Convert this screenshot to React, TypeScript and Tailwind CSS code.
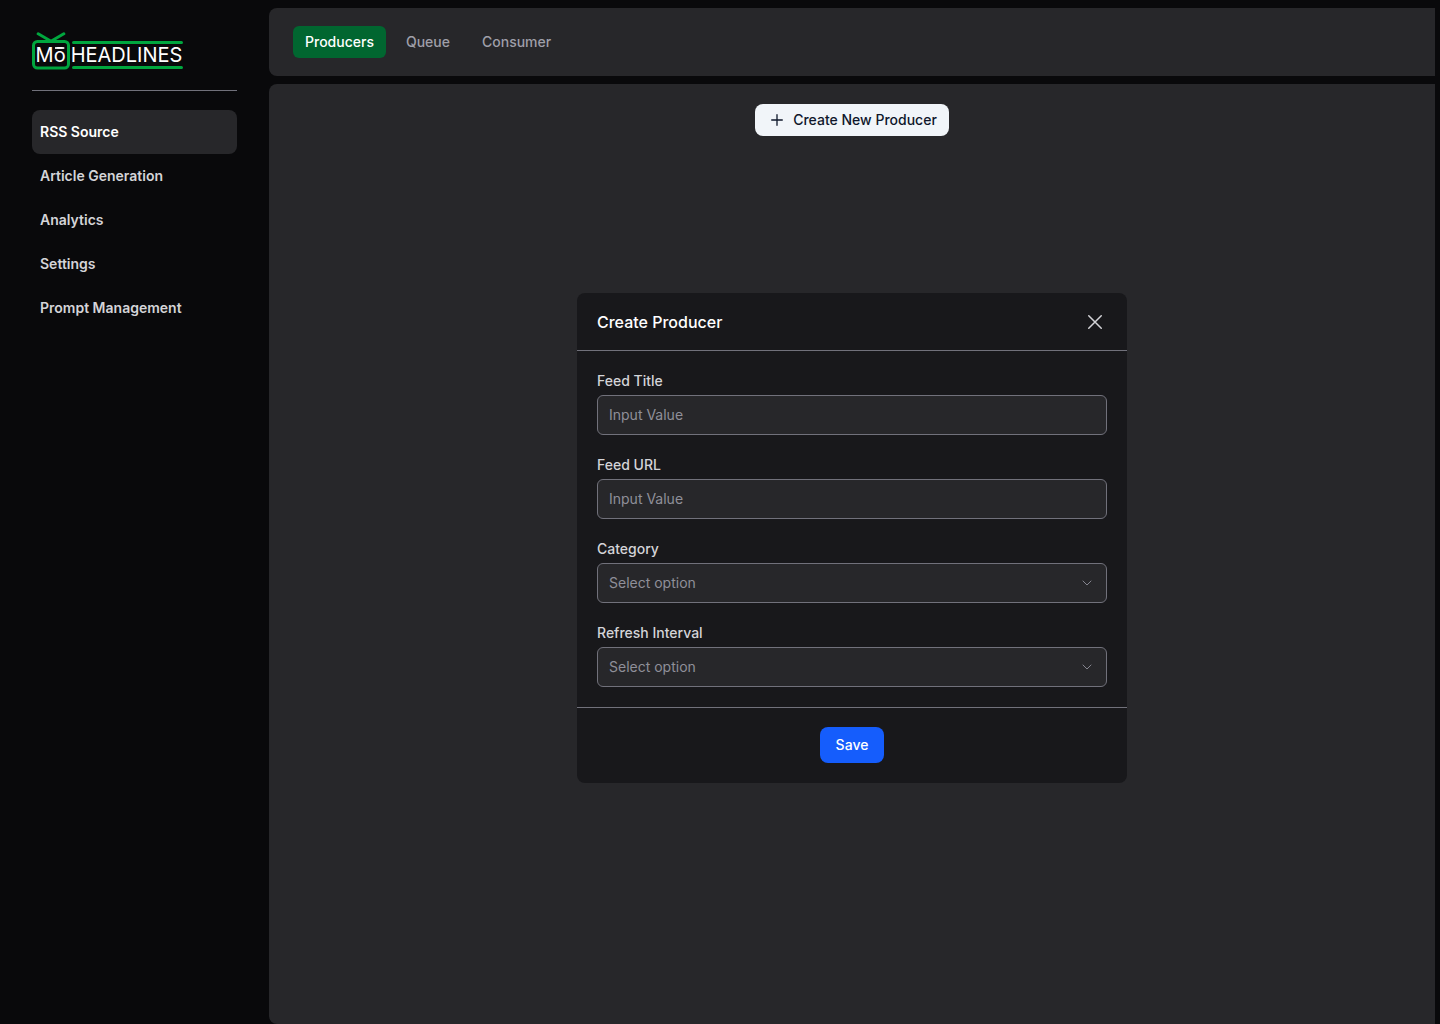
import React from "react";

const navItems = ["RSS Source", "Article Generation", "Analytics", "Settings", "Prompt Management"];
const tabs = ["Producers", "Queue", "Consumer"];

function Logo() {
  return (
    <svg width="152" height="38" viewBox="0 0 152 38" className="block" fill="none" aria-label="Mo Headlines">
      <g stroke="#00a63e" strokeWidth="3" strokeLinecap="round">
        <path d="M6.2 1.8L19 9.2L31.8 1.8" strokeLinejoin="round" />
        <rect x="1.5" y="9.5" width="35" height="26.5" rx="4" />
        <path d="M41.5 10.5H149.5M41.5 35.5H149.5" />
      </g>
      <text x="3.6" y="30" fill="#fff" fontFamily="Inter, sans-serif" fontSize="20">Mō</text>
      <path d="M23 16H32.3" stroke="#fff" strokeWidth="1.7" />
      <text x="38.7" y="30" fill="#fff" fontFamily="Inter, sans-serif" fontSize="20">HEADLINES</text>
    </svg>
  );
}

function CloseIcon() {
  return (
    <svg width="24" height="24" viewBox="0 0 24 24" fill="none" stroke="#d4d4d8" strokeWidth="1.5" strokeLinecap="round">
      <path d="M5.75 5.75L18.25 18.25M18.25 5.75L5.75 18.25" />
    </svg>
  );
}

function ChevronIcon() {
  return (
    <svg width="16" height="16" viewBox="0 0 16 16" fill="none" stroke="#85858f" strokeLinecap="round" strokeLinejoin="round">
      <path d="M4 6L8 10L12 6" />
    </svg>
  );
}

function PlusIcon() {
  return (
    <svg width="16" height="16" viewBox="0 0 16 16" fill="none" stroke="#0f172b" strokeWidth="1.3" strokeLinecap="round">
      <path d="M8 2.7V13.3M2.7 8H13.3" />
    </svg>
  );
}

function Field({ label, select }: { label: string; select?: boolean }) {
  return (
    <div className="flex flex-col gap-1">
      <label className="text-sm leading-5 font-medium text-zinc-300">{label}</label>
      {select ? (
        <button className="flex h-10 items-center justify-between rounded-md border border-zinc-500 bg-zinc-800 px-[11px] text-sm text-[#8f8f99]">
          Select option
          <ChevronIcon />
        </button>
      ) : (
        <input
          placeholder="Input Value"
          className="h-10 rounded-md border border-zinc-500 bg-zinc-800 px-[11px] pb-0.5 text-sm text-white placeholder:text-[#8f8f99]"
        />
      )}
    </div>
  );
}

function ProducerDialog() {
  return (
    <section className="flex w-[550px] flex-col rounded-lg bg-zinc-900">
      <header className="flex h-[58px] items-center justify-between border-b border-zinc-500 px-5">
        <h2 className="text-base font-medium text-white">Create Producer</h2>
        <button aria-label="Close">
          <CloseIcon />
        </button>
      </header>
      <div className="flex flex-col gap-5 p-5">
        <Field label="Feed Title" />
        <Field label="Feed URL" />
        <Field label="Category" select />
        <Field label="Refresh Interval" select />
      </div>
      <footer className="flex h-[76px] justify-center border-t border-zinc-500 pt-[19px]">
        <button className="h-9 rounded-lg bg-blue-600 px-4 text-sm font-medium text-white">Save</button>
      </footer>
    </section>
  );
}

export default function App() {
  return (
    <div className="flex h-screen w-full overflow-hidden bg-zinc-950 font-['Inter',sans-serif]">
      <aside className="flex w-[269px] shrink-0 flex-col px-8 pt-8">
        <div className="h-[59px] border-b border-zinc-500">
          <Logo />
        </div>
        <nav className="mt-[19px] flex flex-col">
          {navItems.map((item, i) => (
            <a
              key={item}
              className={
                i === 0
                  ? "flex h-11 items-center rounded-lg bg-zinc-800 px-2 text-sm font-semibold text-white"
                  : "flex h-11 items-center rounded-lg px-2 text-sm font-semibold text-zinc-300"
              }
            >
              {item}
            </a>
          ))}
        </nav>
      </aside>
      <main className="flex w-[1166px] shrink-0 flex-col gap-2 pt-2">
        <div className="flex h-[68px] shrink-0 items-center gap-2 rounded-l-lg bg-zinc-800 px-6">
          {tabs.map((tab, i) => (
            <button
              key={tab}
              className={
                i === 0
                  ? "h-8 rounded-md bg-green-800 px-3 text-sm font-medium text-white"
                  : "h-8 rounded-md px-3 text-sm font-medium text-zinc-400"
              }
            >
              {tab}
            </button>
          ))}
        </div>
        <div className="flex flex-1 flex-col items-center rounded-l-lg bg-zinc-800 pt-5">
          <button className="flex h-8 items-center gap-2 rounded-lg bg-slate-100 pr-3 pl-[14px] text-sm font-medium text-slate-900">
            <PlusIcon />
            Create New Producer
          </button>
          <div className="mt-[157px]">
            <ProducerDialog />
          </div>
        </div>
      </main>
    </div>
  );
}
